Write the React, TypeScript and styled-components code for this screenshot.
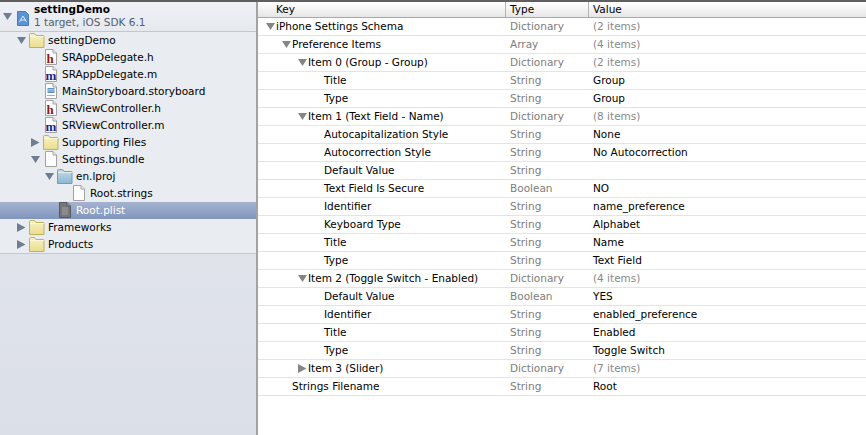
import React from 'react';
import styled, { createGlobalStyle } from 'styled-components';

const GlobalStyle = createGlobalStyle`
  html, body { margin: 0; padding: 0; background: #fff; }
  body { font-family: "DejaVu Sans", "Liberation Sans", sans-serif; font-size: 10.5px; color: #000; }
`;

type NavKind = 'folder' | 'blue' | 'h' | 'm' | 'board' | 'file' | 'plist';
type Arrow = 'open' | 'closed' | 'none';

interface NavItem {
  label: string;
  depth: number;
  arrow: Arrow;
  kind: NavKind;
  selected?: boolean;
}

interface PlistRow {
  key: string;
  depth: number;
  arrow: Arrow;
  type: string;
  value?: string;
  muted?: boolean;
}

const navItems: NavItem[] = [
  { label: 'settingDemo', depth: 0, arrow: 'open', kind: 'folder' },
  { label: 'SRAppDelegate.h', depth: 1, arrow: 'none', kind: 'h' },
  { label: 'SRAppDelegate.m', depth: 1, arrow: 'none', kind: 'm' },
  { label: 'MainStoryboard.storyboard', depth: 1, arrow: 'none', kind: 'board' },
  { label: 'SRViewController.h', depth: 1, arrow: 'none', kind: 'h' },
  { label: 'SRViewController.m', depth: 1, arrow: 'none', kind: 'm' },
  { label: 'Supporting Files', depth: 1, arrow: 'closed', kind: 'folder' },
  { label: 'Settings.bundle', depth: 1, arrow: 'open', kind: 'file' },
  { label: 'en.lproj', depth: 2, arrow: 'open', kind: 'blue' },
  { label: 'Root.strings', depth: 3, arrow: 'none', kind: 'file' },
  { label: 'Root.plist', depth: 2, arrow: 'none', kind: 'plist', selected: true },
  { label: 'Frameworks', depth: 0, arrow: 'closed', kind: 'folder' },
  { label: 'Products', depth: 0, arrow: 'closed', kind: 'folder' },
];

const plistRows: PlistRow[] = [
  { key: 'iPhone Settings Schema', depth: 0, arrow: 'open', type: 'Dictionary', value: '(2 items)', muted: true },
  { key: 'Preference Items', depth: 1, arrow: 'open', type: 'Array', value: '(4 items)', muted: true },
  { key: 'Item 0 (Group - Group)', depth: 2, arrow: 'open', type: 'Dictionary', value: '(2 items)', muted: true },
  { key: 'Title', depth: 3, arrow: 'none', type: 'String', value: 'Group' },
  { key: 'Type', depth: 3, arrow: 'none', type: 'String', value: 'Group' },
  { key: 'Item 1 (Text Field - Name)', depth: 2, arrow: 'open', type: 'Dictionary', value: '(8 items)', muted: true },
  { key: 'Autocapitalization Style', depth: 3, arrow: 'none', type: 'String', value: 'None' },
  { key: 'Autocorrection Style', depth: 3, arrow: 'none', type: 'String', value: 'No Autocorrection' },
  { key: 'Default Value', depth: 3, arrow: 'none', type: 'String' },
  { key: 'Text Field Is Secure', depth: 3, arrow: 'none', type: 'Boolean', value: 'NO' },
  { key: 'Identifier', depth: 3, arrow: 'none', type: 'String', value: 'name_preference' },
  { key: 'Keyboard Type', depth: 3, arrow: 'none', type: 'String', value: 'Alphabet' },
  { key: 'Title', depth: 3, arrow: 'none', type: 'String', value: 'Name' },
  { key: 'Type', depth: 3, arrow: 'none', type: 'String', value: 'Text Field' },
  { key: 'Item 2 (Toggle Switch - Enabled)', depth: 2, arrow: 'open', type: 'Dictionary', value: '(4 items)', muted: true },
  { key: 'Default Value', depth: 3, arrow: 'none', type: 'Boolean', value: 'YES' },
  { key: 'Identifier', depth: 3, arrow: 'none', type: 'String', value: 'enabled_preference' },
  { key: 'Title', depth: 3, arrow: 'none', type: 'String', value: 'Enabled' },
  { key: 'Type', depth: 3, arrow: 'none', type: 'String', value: 'Toggle Switch' },
  { key: 'Item 3 (Slider)', depth: 2, arrow: 'closed', type: 'Dictionary', value: '(7 items)', muted: true },
  { key: 'Strings Filename', depth: 1, arrow: 'none', type: 'String', value: 'Root' },
];

const Window = styled.div`
  width: 866px;
  height: 435px;
  display: flex;
  flex-direction: column;
  overflow: hidden;
  border-top: 2px solid #5f5f5f;
  box-sizing: border-box;
`;

const Split = styled.div`
  flex: 1;
  display: flex;
  min-height: 0;
`;

const Sidebar = styled.aside`
  width: 256px;
  flex: none;
  border-right: 2px solid #a3a3a3;
  background: linear-gradient(#e6e9ef, #dbdfe8);
`;

const ProjectRow = styled.div`
  height: 29px;
  display: flex;
  align-items: center;
  padding-left: 3px;
  border-bottom: 1px solid #c4c6c9;
  background: linear-gradient(#eff1f5, #e6e9ee);
`;

const ProjectIcon = styled.svg`
  width: 12px;
  height: 15px;
  margin: 3px 5px 0 5px;
  flex: none;
`;

const ProjectText = styled.div`
  display: flex;
  flex-direction: column;
  line-height: 13px;
  padding-bottom: 2px;
`;

const ProjectName = styled.span`
  font-weight: bold;
`;

const ProjectMeta = styled.span`
  color: #55606e;
`;

const Tree = styled.div`
  border-bottom: 1px solid #c4c6c9;
  background: #e9ecf1;
`;

const NavRow = styled.div<{ $depth: number; $selected?: boolean }>`
  height: 17px;
  box-sizing: border-box;
  padding-bottom: 1px;
  display: flex;
  align-items: center;
  padding-left: ${(p) => 17 + p.$depth * 14}px;
  color: ${(p) => (p.$selected ? '#fff' : '#000')};
  background: ${(p) => (p.$selected ? 'linear-gradient(#a5b3d0, #8195bd)' : 'transparent')};
`;

const ArrowSlot = styled.span`
  width: 12px;
  height: 12px;
  flex: none;
  display: flex;
  align-items: center;
`;

const IconSlot = styled.span`
  width: 16px;
  height: 16px;
  flex: none;
  margin-right: 3px;
  display: flex;
  align-items: center;
  justify-content: center;
`;

const Main = styled.main`
  flex: 1;
  min-width: 0;
`;

const columns = '248px 83px 1fr';

const HeaderRow = styled.div`
  height: 15px;
  display: grid;
  grid-template-columns: ${columns};
  border-bottom: 1px solid #a9a9a9;
  background: linear-gradient(#ffffff, #e6e6e6);
  line-height: 15px;
`;

const HeaderCell = styled.div<{ $first?: boolean }>`
  padding-left: ${(p) => (p.$first ? 18 : 4)}px;
  border-left: ${(p) => (p.$first ? 'none' : '1px solid #b5b5b5')};
  margin-left: ${(p) => (p.$first ? 0 : -1)}px;
`;

const Row = styled.div`
  height: 17px;
  display: grid;
  grid-template-columns: ${columns};
  border-bottom: 1px solid #e4e4e4;
  line-height: 17px;
`;

const KeyCell = styled.div<{ $depth: number }>`
  display: flex;
  align-items: center;
  padding-left: ${(p) => 8 + p.$depth * 16}px;
  white-space: nowrap;
`;

const KeyArrow = styled.span`
  width: 10px;
  flex: none;
  display: flex;
  align-items: center;
`;

const TypeCell = styled.div`
  padding-left: 4px;
  color: #7d7d7d;
`;

const ValueCell = styled.div<{ $muted?: boolean }>`
  padding-left: 4px;
  color: ${(p) => (p.$muted ? '#888' : '#000')};
`;

const SheetLetter = styled.text`
  font-family: "Liberation Serif", serif;
  font-weight: bold;
`;

function Triangle({ arrow, color }: { arrow: Arrow; color: string }) {
  if (arrow === 'none') return null;
  const points = arrow === 'open' ? '0,1 9,1 4.500,8' : '0,0 8.500,4.500 0,9';
  return (
    <svg width="9" height="9" viewBox="0 0 9 9">
      <polygon points={points} fill={color} />
    </svg>
  );
}

function Folder({ blue }: { blue?: boolean }) {
  const stroke = blue ? '#6f9dbb' : '#bdb160';
  const top = blue ? '#c4dcec' : '#f8f2c6';
  const bottom = blue ? '#8cb6d3' : '#ebde8e';
  const id = blue ? 'blueFolder' : 'yellowFolder';
  return (
    <svg width="16" height="15" viewBox="0 0 16 15">
      <defs>
        <linearGradient id={id} x1="0" y1="0" x2="0" y2="1">
          <stop offset="0" stopColor={top} />
          <stop offset="1" stopColor={bottom} />
        </linearGradient>
      </defs>
      <path
        d="M.5 14.500V1.500q0-1 1-1h4l1.500 2h7.500q.5 0 .5 1v11z"
        fill={`url(#${id})`}
        stroke={stroke}
      />
      <path d="M1 3.500h14" stroke="#fffbe6" strokeOpacity="0.7" />
    </svg>
  );
}

function Sheet({ fill, children }: { fill?: string; children?: React.ReactNode }) {
  const stroke = fill ? '#5a5a5a' : '#a2a2a2';
  return (
    <svg width="12" height="16" viewBox="0 0 12 16">
      <path d="M.5.5h7.500l3.500 3.500v11.500h-11z" fill={fill ?? '#fdfdfd'} stroke={stroke} />
      <path d="M8 .5v3.500h3.500" fill={fill ? '#9a9a9a' : '#ececec'} stroke={stroke} />
      {children}
    </svg>
  );
}

function FileIcon({ kind }: { kind: NavKind }) {
  switch (kind) {
    case 'folder':
      return <Folder />;
    case 'blue':
      return <Folder blue />;
    case 'h':
      return (
        <Sheet>
          <SheetLetter x="1.500" y="13.500" fontSize="13" fill="#8f1418">h</SheetLetter>
        </Sheet>
      );
    case 'm':
      return (
        <Sheet>
          <SheetLetter x="0.500" y="13.500" fontSize="13" fill="#1f2088">m</SheetLetter>
        </Sheet>
      );
    case 'board':
      return (
        <Sheet>
          <rect x="2.500" y="5" width="7" height="5" fill="#5b93c8" />
          <path d="M2.500 6.500h7M2.500 8h7" stroke="#dbe9f5" strokeWidth="0.600" />
          <path d="M2.500 12.500h7" stroke="#555" strokeDasharray="1 1" />
        </Sheet>
      );
    case 'plist':
      return (
        <Sheet fill="#75767a">
          <path d="M3 6h6M3 8h6M3 10h6M3 12h6" stroke="#a9aab0" strokeWidth="0.800" />
        </Sheet>
      );
    default:
      return <Sheet />;
  }
}

export default function App() {
  return (
    <Window>
      <GlobalStyle />
      <Split>
        <Sidebar>
          <ProjectRow>
            <Triangle arrow="open" color="#6f7d90" />
            <ProjectIcon viewBox="0 0 12 15">
              <path d="M.5.5h8l3 3v11h-11z" fill="#5c93d8" stroke="#4a7ab8" />
              <path d="M2.500 11l3.500-6 3.500 6M3.500 9h5" fill="none" stroke="#d8e8fa" />
            </ProjectIcon>
            <ProjectText>
              <ProjectName>settingDemo</ProjectName>
              <ProjectMeta>1 target, iOS SDK 6.1</ProjectMeta>
            </ProjectText>
          </ProjectRow>
          <Tree>
            {navItems.map((item) => (
              <NavRow key={item.label} $depth={item.depth} $selected={item.selected}>
                <ArrowSlot>
                  <Triangle arrow={item.arrow} color="#6f7d90" />
                </ArrowSlot>
                <IconSlot>
                  <FileIcon kind={item.kind} />
                </IconSlot>
                {item.label}
              </NavRow>
            ))}
          </Tree>
        </Sidebar>
        <Main>
          <HeaderRow>
            <HeaderCell $first>Key</HeaderCell>
            <HeaderCell>Type</HeaderCell>
            <HeaderCell>Value</HeaderCell>
          </HeaderRow>
          {plistRows.map((row, i) => (
            <Row key={i}>
              <KeyCell $depth={row.depth}>
                <KeyArrow>
                  <Triangle arrow={row.arrow} color="#858585" />
                </KeyArrow>
                {row.key}
              </KeyCell>
              <TypeCell>{row.type}</TypeCell>
              <ValueCell $muted={row.muted}>{row.value}</ValueCell>
            </Row>
          ))}
        </Main>
      </Split>
    </Window>
  );
}
